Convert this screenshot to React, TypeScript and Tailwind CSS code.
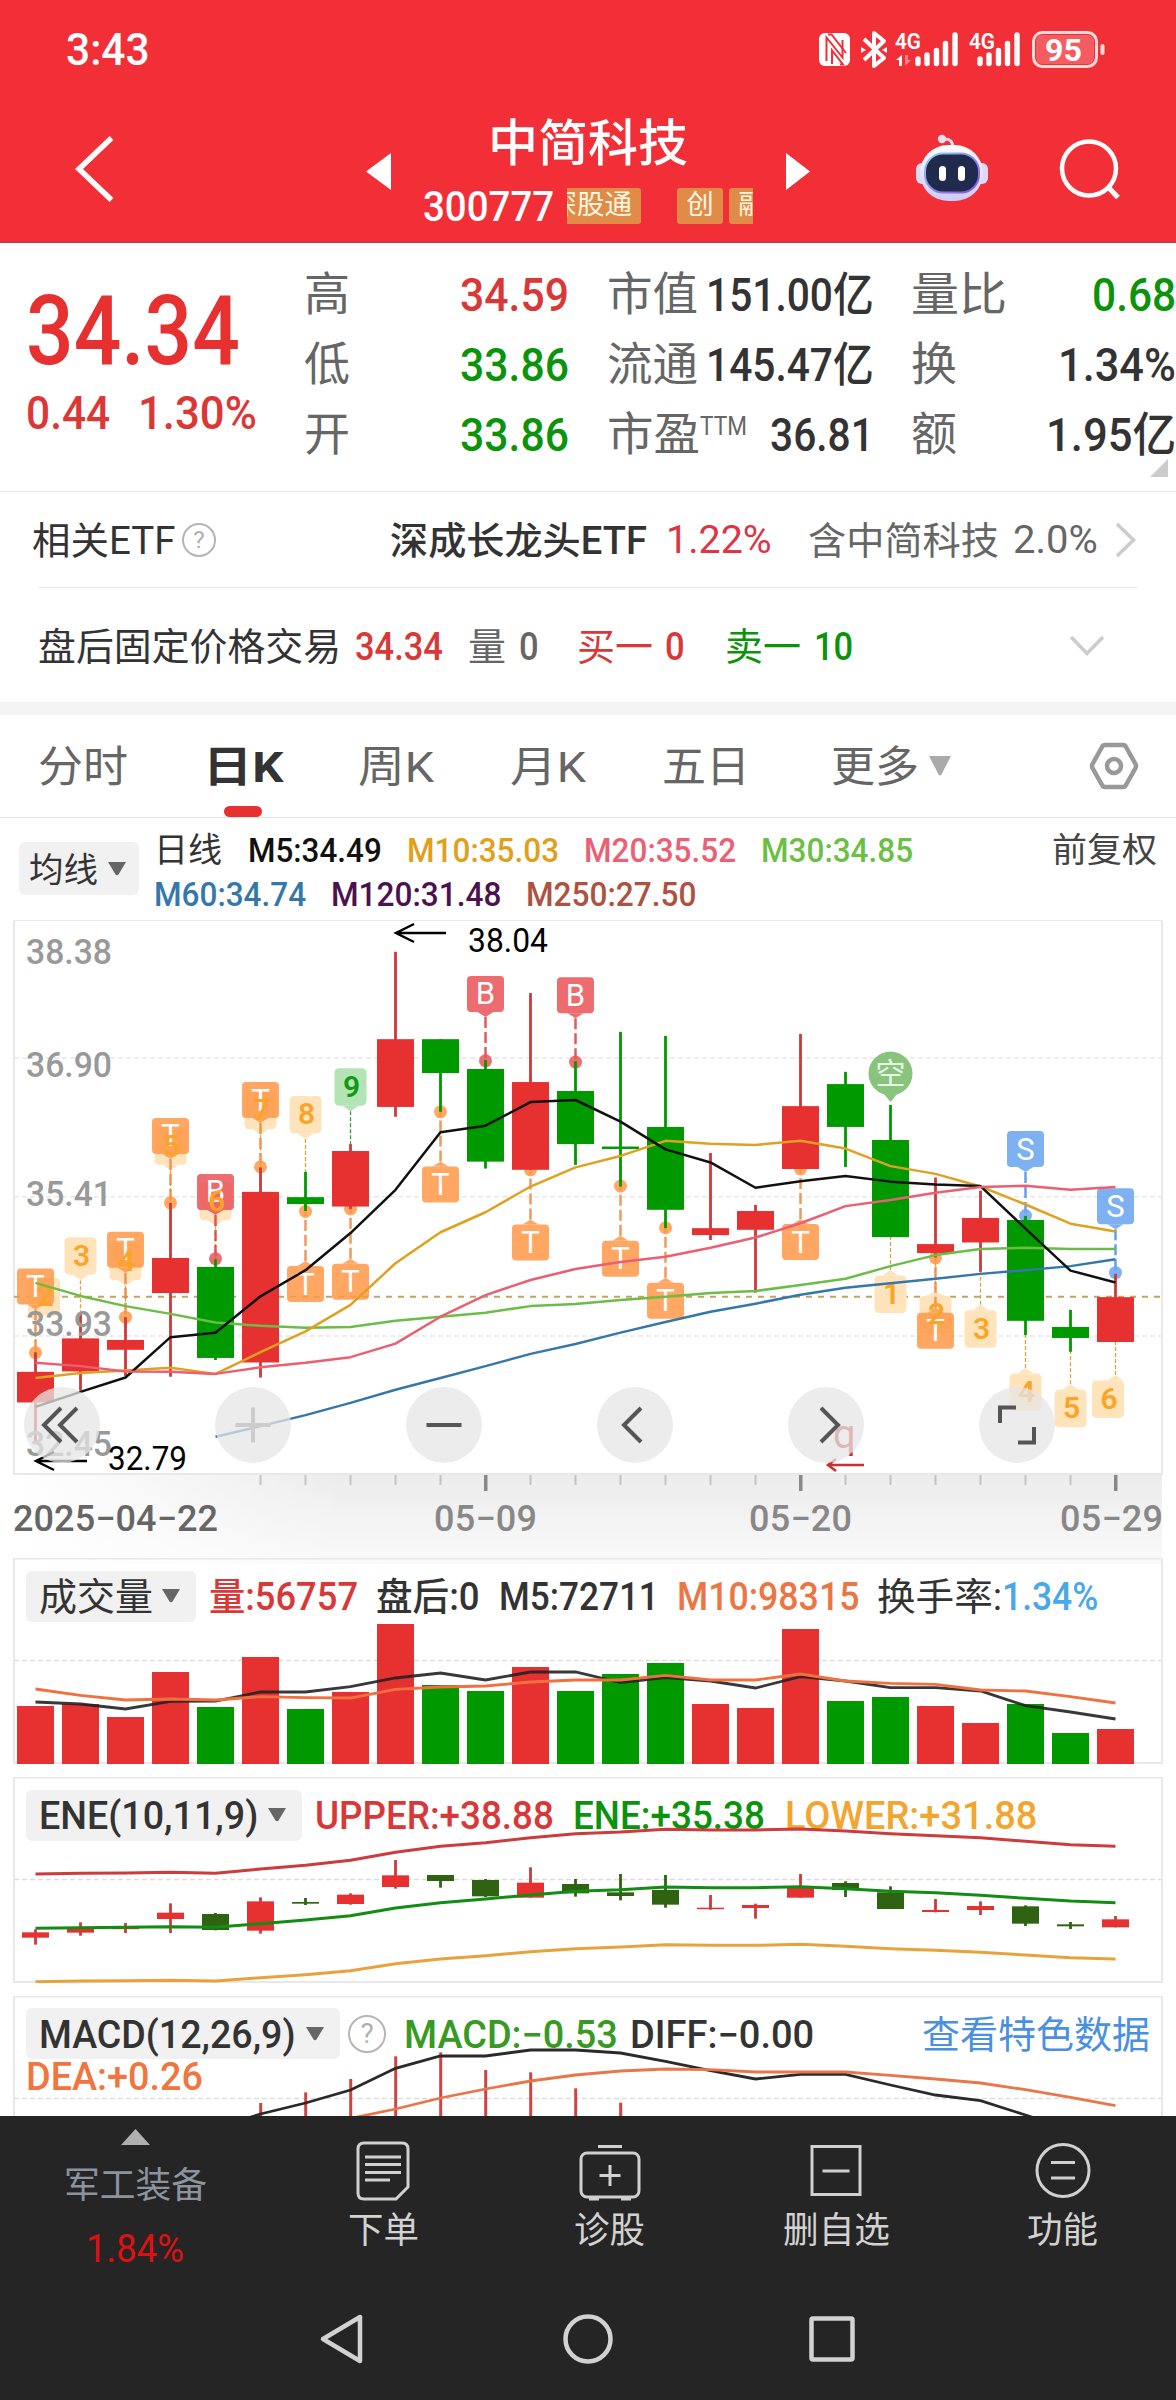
import { useLayoutEffect, useRef } from "react";
import type { ReactNode } from "react";
import { clsx } from "clsx";

const RED = "#e73030";
const GREEN = "#009900";

/* ---------- data: one entry per trading day ---------- */

// [colour, high, body top, body bottom, low] in plot units
type Candle = [string, number, number, number, number];

const candles: Candle[] = [
  ["r", 1108, 1156, 1231, 1330],
  ["r", 1010, 1074, 1155, 1202],
  ["r", 1022, 1078, 1102, 1166],
  ["r", 742, 877, 963, 1168],
  ["g", 880, 899, 1122, 1127],
  ["r", 655, 715, 1133, 1170],
  ["g", 666, 728, 745, 762],
  ["r", 598, 615, 751, 757],
  ["r", 127, 341, 507, 531],
  ["g", 341, 341, 424, 519],
  ["g", 392, 414, 641, 658],
  ["r", 228, 446, 661, 661],
  ["g", 395, 468, 598, 649],
  ["g", 323, 604, 610, 702],
  ["g", 333, 556, 759, 804],
  ["r", 620, 804, 821, 833],
  ["r", 747, 762, 808, 962],
  ["r", 328, 505, 659, 659],
  ["g", 421, 451, 556, 654],
  ["g", 502, 588, 826, 826],
  ["r", 680, 843, 865, 876],
  ["r", 712, 779, 839, 911],
  ["g", 774, 784, 1031, 1066],
  ["g", 1004, 1046, 1073, 1107],
  ["r", 916, 973, 1083, 1083],
];

const ma5 = [1242, 1205, 1170, 1071, 1060, 971, 907, 816, 710, 569, 553, 495, 490, 543, 611, 643, 705, 689, 676, 690, 697, 701, 805, 908, 937];
const ma10 = [1171, 1159, 1153, 1146, 1161, 1108, 1057, 992, 890, 814, 765, 702, 655, 627, 590, 597, 600, 590, 609, 652, 671, 702, 746, 793, 812];
const ma20 = [1134, 1142, 1155, 1156, 1161, 1145, 1134, 1120, 1087, 1021, 968, 931, 904, 887, 874, 852, 827, 792, 750, 735, 717, 703, 700, 710, 703];
const ma30 = [938, 970, 995, 1014, 1035, 1043, 1048, 1046, 1031, 1021, 1011, 995, 990, 980, 972, 963, 958, 943, 928, 897, 870, 855, 852, 855, 855];
const ma60 = [1315, 1289, 1262, 1232, 1200, 1171, 1142, 1112, 1088, 1060, 1034, 1009, 989, 967, 950, 939, 928, 916, 907, 897, 880];

const volumes = [498, 492, 531, 396, 501, 351, 507, 456, 252, 435, 453, 381, 453, 402, 369, 492, 504, 267, 483, 471, 498, 549, 492, 579, 567];
const vol5 = [486, 492, 507, 484, 483, 456, 456, 440, 414, 399, 420, 396, 396, 428, 413, 423, 444, 410, 423, 443, 443, 453, 497, 516, 537];
const vol10 = [447, 466, 480, 477, 480, 470, 473, 474, 448, 441, 438, 426, 420, 420, 406, 420, 420, 402, 423, 430, 433, 450, 453, 470, 489];

const eneCandles: Candle[] = [
  ["r", 1168, 1177, 1193, 1214],
  ["r", 1147, 1163, 1178, 1187],
  ["r", 1149, 1163, 1166, 1179],
  ["r", 1090, 1118, 1137, 1179],
  ["g", 1119, 1122, 1170, 1171],
  ["r", 1072, 1084, 1172, 1181],
  ["g", 1074, 1086, 1091, 1095],
  ["r", 1060, 1064, 1092, 1094],
  ["r", 960, 1006, 1041, 1046],
  ["g", 1005, 1005, 1023, 1043],
  ["g", 1017, 1020, 1069, 1071],
  ["r", 982, 1028, 1073, 1073],
  ["g", 1017, 1032, 1060, 1070],
  ["g", 1002, 1057, 1068, 1081],
  ["g", 1005, 1050, 1094, 1103],
  ["r", 1065, 1103, 1107, 1109],
  ["r", 1091, 1095, 1104, 1136],
  ["r", 1002, 1043, 1073, 1073],
  ["g", 1024, 1029, 1050, 1071],
  ["g", 1039, 1057, 1107, 1107],
  ["r", 1077, 1110, 1116, 1117],
  ["r", 1084, 1098, 1110, 1125],
  ["g", 1096, 1099, 1151, 1158],
  ["g", 1146, 1153, 1159, 1167],
  ["r", 1128, 1138, 1162, 1162],
];
const eneUpper = [1002, 1000, 999, 997, 1000, 987, 976, 961, 937, 919, 908, 893, 881, 876, 868, 870, 870, 867, 873, 881, 887, 893, 904, 914, 919];
const eneMid = [1165, 1163, 1162, 1160, 1162, 1151, 1140, 1127, 1104, 1088, 1077, 1065, 1054, 1049, 1041, 1043, 1043, 1040, 1046, 1054, 1058, 1066, 1075, 1083, 1088];
const eneLower = [1325, 1323, 1322, 1321, 1323, 1313, 1304, 1292, 1271, 1257, 1247, 1235, 1226, 1221, 1214, 1216, 1216, 1213, 1219, 1226, 1231, 1237, 1245, 1253, 1257];

const macdBars = [369, 337, 297, 229, 217, 270, 277, 325, 368];
const diff = [445, 402, 369, 330, 265, 228, 228, 210, 210, 219, 244, 272, 297, 283, 283, 315, 345, 362, 405, 450];
const dea = [415, 387, 354, 327, 303, 285, 273, 267, 269, 276, 276, 276, 286, 297, 309, 329, 352, 377];

// T / B / S signals: [day, letter, box top, dot]
const signals: [number, string, number, number][] = [
  [0, "T", 903, 1109],
  [2, "T", 813, 1022],
  [3, "T", 534, 742],
  [4, "B", 671, 879],
  [5, "T", 446, 654],
  [6, "T", 897, 763],
  [7, "T", 891, 757],
  [9, "T", 653, 519],
  [10, "B", 186, 394],
  [11, "T", 795, 661],
  [12, "B", 189, 397],
  [13, "T", 835, 701],
  [14, "T", 938, 803],
  [17, "T", 794, 659],
  [20, "T", 1011, 877],
  [22, "S", 566, 773],
  [24, "S", 706, 913],
];

// sequence counters: [day, digit, box top, line end, x shift]
const counters: [number, string, number, number, number][] = [
  [0, "2", 926, 1108, 8.5],
  [1, "3", 826, 1010, 0],
  [2, "4", 840, 1022, 0],
  [3, "5", 557, 742, 0],
  [4, "6", 693, 880, 0],
  [5, "7", 470, 655, 0],
  [6, "8", 480, 666, 0],
  [7, "9", 412, 598, 0],
  [19, "1", 920, 826, 0],
  [20, "2", 970, 876, 0],
  [21, "3", 1005, 911, 0],
  [22, "4", 1160, 1066, 0],
  [23, "5", 1200, 1107, 0],
  [24, "6", 1177, 1083, -7.5],
];

/* ---------- helpers ---------- */

const px = (i: number) => 35.5 + i * 45;
const ky = (v: number) => v / 2.45 - 20;
const vy = (v: number) => v / 3 - 18;
const ey = (v: number) => v / 3 - 237;
const my = (v: number) => v / 3 - 16;

const points = (vals: number[], y: (v: number) => number, start = 0) =>
  vals.map((v, i) => `${px(i + start)},${y(v)}`).join(" ");

// Stretches its text so that it exactly fills the width given by className
function Fit({ children, className }: { children: ReactNode; className?: string }) {
  const outer = useRef<HTMLSpanElement>(null);
  const inner = useRef<HTMLSpanElement>(null);
  useLayoutEffect(() => {
    if (!outer.current || !inner.current) return;
    const scale = outer.current.clientWidth / inner.current.offsetWidth;
    inner.current.style.transform = `scaleX(${scale})`;
  }, []);
  return (
    <span ref={outer} className={clsx("block shrink-0 whitespace-nowrap pt-[2px] leading-none", className)}>
      <span ref={inner} className="inline-block origin-left">
        {children}
      </span>
    </span>
  );
}

function Caret({ className }: { className?: string }) {
  return (
    <svg className={clsx("shrink-0", className)} width="18" height="14" viewBox="0 0 18 14">
      <path d="M0 0H18L10.5 12.5Q9 14 7.5 12.5Z" fill="#666" />
    </svg>
  );
}

function Help({ className }: { className?: string }) {
  return (
    <span
      className={clsx(
        "flex shrink-0 items-center justify-center rounded-full border-2 border-[#b5b5b5] leading-none text-[#b0b0b0]",
        className
      )}
    >
      ?
    </span>
  );
}

/* ---------- header ---------- */

function StatusBar() {
  return (
    <div className="flex h-[100px] items-center justify-between pl-[66px] pr-[68px] text-white">
      <Fit className="mt-[-3px] w-[84px] text-[45px] font-medium">3:43</Fit>
      <svg width="292" height="44" viewBox="816 28 292 44" fill="#fff">
        <rect x="819" y="33" width="31" height="33" rx="6" />
        <g stroke="#f22f37" strokeWidth="2" fill="none">
          <path d="M826.500 61V37.500L842.500 57.500V40" />
          <path d="M828 34.500H831.500L846 53" />
          <path d="M832 64V50.500L843 64.500H840" />
        </g>
        <path d="M864 39L884 58L874 66V33L884 41L864 60" stroke="#fff" strokeWidth="4" fill="none" strokeLinejoin="round" />
        <path d="M861 47L866 50L861 53ZM887 47L882 50L887 53Z" />
        <text x="895" y="49" fontSize="22" fontWeight="600" textLength="26" lengthAdjust="spacingAndGlyphs">4G</text>
        <path d="M896 60L902 55V66H899V60Z" />
        <path d="M905 55V66L911 60H908V55Z" opacity=".4" />
        <g stroke="#fff" strokeWidth="5.4" strokeLinecap="round">
          <path d="M918 59V63.500M927 55V63.500M936.500 50.500V63.500M945.500 43.500V63.500M955 35V63.500" />
          <path d="M980 59V63.500M989 55V63.500M998.500 50.500V63.500M1007.500 43.500V63.500M1017 35V63.500" />
        </g>
        <text x="969" y="49" fontSize="22" fontWeight="600" textLength="26" lengthAdjust="spacingAndGlyphs">4G</text>
        <rect x="1036" y="35" width="58" height="29" rx="6" opacity=".22" />
        <rect x="1033.500" y="32.500" width="63" height="34" rx="9" fill="none" stroke="#ffdcdc" strokeWidth="3" />
        <rect x="1100.500" y="44" width="4" height="11" rx="2" fill="#ffdcdc" />
        <text x="1045" y="60.500" fontSize="32" fontWeight="700" textLength="37" lengthAdjust="spacingAndGlyphs">95</text>
      </svg>
    </div>
  );
}

function Robot() {
  return (
    <svg width="76" height="70" viewBox="914 133 76 70" className="mb-[6px] ml-[104px] shrink-0">
      <defs>
        <linearGradient id="shell" x1="0" y1="0" x2="0" y2="1">
          <stop offset="0" stopColor="#fff" />
          <stop offset="1" stopColor="#cfcaf5" />
        </linearGradient>
        <linearGradient id="rim" x1="0" y1="0" x2="1" y2="1">
          <stop offset="0" stopColor="#8fd0f5" />
          <stop offset="1" stopColor="#8a4be0" />
        </linearGradient>
      </defs>
      <path d="M943 139Q953 138 953 148" stroke="#e8dcf5" strokeWidth="3" fill="none" />
      <circle cx="942" cy="139" r="4.200" fill="#f4dfee" />
      <rect x="916" y="163" width="14" height="21" rx="6" fill="#dcd8f8" />
      <rect x="974" y="163" width="14" height="21" rx="6" fill="#dcd8f8" />
      <rect x="920" y="145" width="63" height="56" rx="28" fill="url(#shell)" />
      <rect x="925" y="153.500" width="54" height="39" rx="18" fill="#1f2a4d" stroke="url(#rim)" strokeWidth="2" />
      <rect x="939" y="166" width="7" height="15" rx="3.500" fill="#fff" />
      <rect x="958" y="166" width="7" height="15" rx="3.500" fill="#fff" />
    </svg>
  );
}

function Header() {
  return (
    <header className="h-[243px] border-b border-[#a8484c] bg-[#f22f37]">
      <StatusBar />
      <div className="flex h-[142px] items-center text-white">
        <svg width="40" height="68" viewBox="0 0 40 68" className="mb-[4px] ml-[75px] shrink-0">
          <path d="M36.500 4L4 35L36.500 66" transform="translate(0 -1)" fill="none" stroke="#fff" strokeWidth="5.500" />
        </svg>
        <svg width="25" height="37" viewBox="0 0 25 37" className="ml-[251px] shrink-0">
          <path d="M25 0V37L0 18.500Z" fill="#fff" />
        </svg>
        <div className="ml-[32px] flex w-[330px] flex-col pt-[4px]">
          <div className="flex h-[44px] items-center justify-center">
            <Fit className="mt-[-2px] w-[200px] text-[50px] font-medium">中简科技</Fit>
          </div>
          <div className="mt-[22px] flex h-[36px] items-center">
            <Fit className="w-[131px] text-[42px] font-medium">300777</Fit>
            <div className="ml-[13px] flex h-[36px] w-[187px] overflow-hidden text-[27.500px] leading-[34px] text-[#fff6e0]">
              <div className="flex w-[74px] shrink-0 justify-end overflow-hidden rounded-r-[3px] bg-[#e08c48] pr-[9px]">
                <span className="whitespace-nowrap">深股通</span>
              </div>
              <div className="ml-[36px] w-[46px] shrink-0 rounded-[3px] bg-[#e08c48] text-center">创</div>
              <div className="ml-[6px] w-[46px] shrink-0 rounded-[3px] bg-[#e08c48] text-center">融</div>
            </div>
          </div>
        </div>
        <svg width="24" height="37" viewBox="0 0 24 37" className="ml-[33px] shrink-0">
          <path d="M0 0V37L24 18.500Z" fill="#fff" />
        </svg>
        <Robot />
        <svg width="64" height="70" viewBox="1058 137 64 70" className="ml-[68px] shrink-0">
          <circle cx="1089" cy="169.500" r="27" fill="none" stroke="#fff" strokeWidth="4.500" />
          <path d="M1108 188L1118 198.500" stroke="#fff" strokeWidth="5" />
        </svg>
      </div>
    </header>
  );
}

/* ---------- quote ---------- */

function Quote() {
  return (
    <section className="relative flex h-[249px] items-start border-b border-[#e8e8e8] bg-white">
      <div className="ml-[26px] w-[278px] shrink-0 pt-[38px]">
        <Fit className="w-[214px] text-[96px] font-medium text-[#e73030]">34.34</Fit>
        <div className="mt-[8px] flex text-[#dc3737]">
          <Fit className="w-[84px] text-[47px] font-medium">0.44</Fit>
          <Fit className="ml-[28px] w-[119px] text-[47px] font-medium">1.30%</Fit>
        </div>
      </div>
      <div className="w-[265px] shrink-0 pt-[15px]">
        {[
          ["高", "34.59"],
          ["低", "33.86"],
          ["开", "33.86"],
        ].map(([label, value], i) => (
          <div key={label} className="flex h-[70px] items-center justify-between">
            <Fit className="w-[46px] text-[46px] text-[#666]">{label}</Fit>
            <Fit className={clsx("w-[109px] text-[47px] font-medium", i === 0 ? "text-[#d93838]" : "text-[#0c930c]")}>{value}</Fit>
          </div>
        ))}
      </div>
      <div className="ml-[38px] w-[267px] shrink-0 pt-[15px] text-[#333]">
        <div className="flex h-[70px] items-center justify-between">
          <Fit className="w-[91px] text-[46px] text-[#666]">市值</Fit>
          <Fit className="w-[168px] text-[47px] font-medium">151.00亿</Fit>
        </div>
        <div className="flex h-[70px] items-center justify-between">
          <Fit className="w-[91px] text-[46px] text-[#666]">流通</Fit>
          <Fit className="w-[168px] text-[47px] font-medium">145.47亿</Fit>
        </div>
        <div className="flex h-[70px] items-center">
          <Fit className="w-[93px] text-[46px] text-[#666]">市盈</Fit>
          <Fit className="mb-[16px] w-[47px] text-[25px] text-[#666]">TTM</Fit>
          <Fit className="ml-[23px] w-[104px] text-[47px] font-medium">36.81</Fit>
        </div>
      </div>
      <div className="ml-[37px] w-[265px] shrink-0 pt-[15px] text-[#333]">
        <div className="flex h-[70px] items-center justify-between">
          <Fit className="w-[96px] text-[46px] text-[#666]">量比</Fit>
          <Fit className="w-[84px] text-[47px] font-medium text-[#0c930c]">0.68</Fit>
        </div>
        <div className="flex h-[70px] items-center justify-between">
          <Fit className="w-[46px] text-[46px] text-[#666]">换</Fit>
          <Fit className="w-[118px] text-[47px] font-medium">1.34%</Fit>
        </div>
        <div className="flex h-[70px] items-center justify-between">
          <Fit className="w-[46px] text-[46px] text-[#666]">额</Fit>
          <Fit className="w-[130px] text-[47px] font-medium">1.95亿</Fit>
        </div>
      </div>
      <svg width="18" height="18" className="absolute bottom-[14px] right-[8px]">
        <path d="M18 0V18H0Z" fill="#ccc" />
      </svg>
    </section>
  );
}

function InfoRows() {
  return (
    <section className="bg-white text-[#333]">
      <div className="flex h-[95px] items-center">
        <Fit className="ml-[32px] w-[144px] text-[38px]">相关ETF</Fit>
        <Help className="ml-[6px] size-[34px] text-[24px]" />
        <Fit className="ml-[174px] w-[257px] text-[38px] font-medium">深成长龙头ETF</Fit>
        <Fit className="ml-[19px] w-[106px] text-[39px] text-[#dc3545]">1.22%</Fit>
        <Fit className="ml-[36px] w-[191px] text-[38px] text-[#666]">含中简科技</Fit>
        <Fit className="ml-[14px] w-[85px] text-[39px] text-[#666]">2.0%</Fit>
        <svg width="22" height="36" viewBox="0 0 22 36" className="ml-[17px] shrink-0">
          <path d="M2 2L18.500 18L2 34" fill="none" stroke="#ccc" strokeWidth="3.500" />
        </svg>
      </div>
      <div className="mx-[38px] h-px bg-[#e8e8e8]" />
      <div className="flex h-[116px] items-center">
        <Fit className="ml-[38px] w-[303px] text-[38px]">盘后固定价格交易</Fit>
        <Fit className="ml-[14px] w-[88px] text-[38px] font-medium text-[#d93838]">34.34</Fit>
        <Fit className="ml-[25px] w-[38px] text-[38px] text-[#666]">量</Fit>
        <Fit className="ml-[13px] w-[20px] text-[38px] font-medium text-[#666]">0</Fit>
        <Fit className="ml-[38px] w-[76px] text-[38px] text-[#d93838]">买一</Fit>
        <Fit className="ml-[12px] w-[20px] text-[38px] font-medium text-[#d93838]">0</Fit>
        <Fit className="ml-[40px] w-[76px] text-[38px] text-[#0c930c]">卖一</Fit>
        <Fit className="ml-[13px] w-[39px] text-[38px] font-medium text-[#0c930c]">10</Fit>
        <svg width="36" height="22" viewBox="0 0 36 22" className="ml-[216px] shrink-0">
          <path d="M2 2L18 18.500L34 2" fill="none" stroke="#ccc" strokeWidth="3.500" />
        </svg>
      </div>
      <div className="mt-[-2px] h-[13px] bg-[#f4f4f4]" />
    </section>
  );
}

function Tabs() {
  return (
    <nav className="flex h-[103px] items-center border-b border-[#e5e5e5] bg-white text-[43px] text-[#666]">
      <Fit className="ml-[38px] w-[90px]">分时</Fit>
      <div className="relative ml-[75px] flex h-full items-center">
        <Fit className="w-[80px] font-bold text-[#333]">日K</Fit>
        <span className="absolute bottom-0 left-[21px] h-[11px] w-[38px] rounded-full bg-[#e73030]" />
      </div>
      <Fit className="ml-[75px] w-[76px]">周K</Fit>
      <Fit className="ml-[76px] w-[76px]">月K</Fit>
      <Fit className="ml-[76px] w-[88px]">五日</Fit>
      <Fit className="ml-[81px] w-[88px]">更多</Fit>
      <svg width="22" height="20" viewBox="0 0 22 20" className="ml-[10px] shrink-0">
        <path d="M0 0H22L12.500 18.500Q11 20.500 9.500 18.500Z" fill="#aaa" />
      </svg>
      <svg width="50" height="48" viewBox="0 0 50 48" className="ml-[138px] shrink-0" fill="none" stroke="#999" strokeWidth="4.500">
        <path d="M16 3H34Q36 3 37 5L46.500 22Q47.500 24 46.500 26L37 43Q36 45 34 45H16Q14 45 13 43L3.500 26Q2.500 24 3.500 22L13 5Q14 3 16 3Z" />
        <circle cx="25" cy="24" r="7" />
      </svg>
    </nav>
  );
}

function MaLegend() {
  return (
    <div className="flex h-[102px] bg-white text-[34px] font-medium">
      <div className="ml-[19px] mt-[24px] flex h-[53px] w-[120px] shrink-0 items-center rounded-[6px] bg-[#f1f1f1] font-normal text-[#333]">
        <Fit className="ml-[10px] w-[69px]">均线</Fit>
        <Caret className="ml-[10px]" />
      </div>
      <div className="ml-[15px] flex flex-col pt-[9px]">
        <div className="flex h-[44px] items-center">
          <Fit className="w-[68px] font-normal text-[#333]">日线</Fit>
          <Fit className="ml-[26px] w-[134px] text-[#111]">M5:34.49</Fit>
          <Fit className="ml-[25px] w-[152px] text-[#e0a01c]">M10:35.03</Fit>
          <Fit className="ml-[25px] w-[152px] text-[#eb6075]">M20:35.52</Fit>
          <Fit className="ml-[25px] w-[152px] text-[#6cbf45]">M30:34.85</Fit>
          <Fit className="ml-[139px] w-[105px] font-normal text-[#444]">前复权</Fit>
        </div>
        <div className="flex h-[44px] items-center">
          <Fit className="w-[152px] text-[#3478ab]">M60:34.74</Fit>
          <Fit className="ml-[25px] w-[170px] text-[#4b124f]">M120:31.48</Fit>
          <Fit className="ml-[25px] w-[170px] text-[#ad5140]">M250:27.50</Fit>
        </div>
      </div>
    </div>
  );
}

/* ---------- K line ---------- */

function Candles({ data, y, width, green }: { data: Candle[]; y: (v: number) => number; width: number; green: string }) {
  return (
    <>
      {data.map(([color, hi, top, bottom, lo], i) => {
        const up = color === "r";
        return (
          <g key={i}>
            <rect x={px(i) - 1.4} y={y(hi)} width="2.800" height={y(lo) - y(hi)} fill={up ? "#cd3a3a" : green} />
            <rect x={px(i) - width / 2} y={y(top)} width={width} height={Math.max(y(bottom) - y(top), 1.5)} fill={up ? RED : green} />
          </g>
        );
      })}
    </>
  );
}

function Signal({ day, letter, top, dot }: { day: number; letter: string; top: number; dot: number }) {
  const x = px(day);
  const y = ky(top);
  const d = ky(dot);
  const below = top > dot;
  const fill = letter === "T" ? "#ff9848" : letter === "B" ? "#ea5358" : "#68a4f0";
  const line = letter === "T" ? "#ee8840" : letter === "B" ? "#d84040" : "#4a90e8";
  const edge = below ? y : y + 36;
  const tip = below ? y - 5 : y + 41;
  return (
    <g>
      <line x1={x} x2={x} y1={tip} y2={d} stroke={line} strokeWidth="2.500" strokeDasharray="11 4" opacity=".85" />
      <circle cx={x} cy={d} r="6.500" fill={fill} opacity=".85" />
      <g opacity=".85">
        <rect x={x - 18.5} y={y} width="37" height="36" rx="4" fill={fill} />
        <path d={`M${x - 8} ${edge}L${x} ${tip}L${x + 8} ${edge}Z`} fill={fill} />
      </g>
      <text x={x} y={y + 28.5} textAnchor="middle" fontSize="31" fill="#fff">
        {letter}
      </text>
    </g>
  );
}

function CounterBox({ day, digit, top, end, shift }: { day: number; digit: string; top: number; end: number; shift: number }) {
  const x = px(day);
  const cx = x + shift;
  const y = ky(top);
  const below = top > end;
  const nine = digit === "9";
  const fill = nine ? "#b4e3b6" : "#ffe3bb";
  const edge = below ? y : y + 37.500;
  const tip = below ? y - 5.500 : y + 43;
  return (
    <g>
      <line x1={x} x2={x} y1={tip} y2={ky(end)} stroke={nine ? "#3a9a3a" : "#d8a848"} strokeWidth="1.300" strokeDasharray="4 2" />
      <rect x={cx - 16} y={y} width="32" height="37.500" rx="4.500" fill={fill} />
      <path d={`M${x - 8} ${edge}L${x} ${tip}L${x + 8} ${edge}Z`} fill={fill} />
    </g>
  );
}

function RoundButton({ faded, children }: { faded?: boolean; children: ReactNode }) {
  return (
    <button className="flex size-[76px] items-center justify-center rounded-full bg-[#e6e6e6]/75">
      <svg width="44" height="44" viewBox="-22 -22 44 44" fill="none" stroke={faded ? "#ccc" : "#555"} strokeWidth="4">
        {children}
      </svg>
    </button>
  );
}

function KLine() {
  return (
    <section className="relative h-[638px] bg-white">
      <div className="absolute inset-x-[14px] bottom-[-6px] top-[554px] bg-linear-to-b from-[#ececec] to-[#fafafa]" />
      <div className="absolute bottom-[-6px] left-[14px] top-[555px] w-[330px] bg-linear-to-r from-white to-transparent" />
      <svg width="1176" height="638" viewBox="0 0 1176 638" className="absolute inset-0">
        <rect x="14" y="0" width="1148" height="554" fill="none" stroke="#e8e8e8" strokeWidth="2" />
        {[387, 727, 1068].map((v) => (
          <line key={v} x1="14" x2="1161" y1={ky(v)} y2={ky(v)} stroke="#e8e8e8" strokeWidth="1.500" strokeDasharray="5 3" />
        ))}
        <line x1="14" x2="1161" y1={ky(972)} y2={ky(972)} stroke="#c9a263" strokeWidth="1.800" strokeDasharray="6 6" />

        {counters.map(([day, digit, top, end, shift]) => (
          <CounterBox key={day} day={day} digit={digit} top={top} end={end} shift={shift} />
        ))}
        {signals.map(([day, letter, top, dot]) => (
          <Signal key={day} day={day} letter={letter} top={top} dot={dot} />
        ))}
        {counters.map(([day, digit, top, , shift]) => (
          <text
            key={day}
            x={px(day) + shift + 1}
            y={ky(top) + 28.5}
            textAnchor="middle"
            fontSize="30"
            fontWeight="600"
            fill={digit === "9" ? "#119a11" : "#fba428"}
          >
            {digit}
          </text>
        ))}
        <path d={`M${px(19) - 9} 171L${px(19)} 182L${px(19) + 9} 171Z`} fill="#88c47c" />
        <circle cx={px(19)} cy="153.500" r="22" fill="#88c47c" />
        <text x={px(19)} y="164" textAnchor="middle" fontSize="30" fill="#eaf8e6">
          空
        </text>

        <Candles data={candles} y={ky} width={37} green={GREEN} />

        <g fontSize="35" fontWeight="500" fill="#999">
          {(
            [
              ["38.38", 44],
              ["36.90", 156.5],
              ["35.41", 285.5],
              ["33.93", 415.5],
              ["32.45", 536],
            ] as [string, number][]
          ).map(([t, y]) => (
            <text key={t} x="26" y={y} textLength={86} lengthAdjust="spacingAndGlyphs">
              {t}
            </text>
          ))}
        </g>

        <g fill="none" strokeWidth="2.500" strokeLinejoin="round">
          <polyline points={points(ma60, ky, 4)} stroke="#3478ab" />
          <polyline points={points(ma30, ky)} stroke="#6cbc48" />
          <polyline points={points(ma10, ky)} stroke="#e0a020" />
          <polyline points={points(ma5, ky)} stroke="#111" />
          <polyline points={points(ma20, ky)} stroke="#ea5f72" />
        </g>

        <g fill="none" stroke="#000" strokeWidth="2.500">
          <path d="M446 13H396M414 4L396 13L414 22" />
          <path d="M87 541H36M54 532L36 541L54 550" />
          <path d="M864 545H828M836 539L828 545L836 551" stroke="#cc2f2f" />
        </g>
        <g fontSize="33" fill="#000">
          <text x="468" y="31.500" textLength="80" lengthAdjust="spacingAndGlyphs">38.04</text>
          <text x="108" y="550" textLength="79" lengthAdjust="spacingAndGlyphs">32.79</text>
        </g>
        <text x="833" y="528" fontSize="40" fill="#cc2f2f">q</text>

        {Array.from({ length: 20 }, (_, i) => i + 5).map((i) => {
          const major = i === 10 || i === 17 || i === 24;
          return (
            <rect
              key={i}
              x={px(i) - (major ? 1.5 : 1)}
              y="555"
              width={major ? 3.5 : 2}
              height={major ? 16 : 10}
              fill={major ? "#888" : "#c4c4c4"}
            />
          );
        })}
        <g fontSize="36" fontWeight="500" fill="#888">
          <text x="13" y="610.500" textLength="205" lengthAdjust="spacing" fill="#666">2025−04−22</text>
          <text x="434" y="610.500" textLength="103" lengthAdjust="spacing">05−09</text>
          <text x="749" y="610.500" textLength="103" lengthAdjust="spacing">05−20</text>
          <text x="1060" y="610.500" textLength="103" lengthAdjust="spacing">05−29</text>
        </g>
      </svg>

      <div className="absolute left-[24px] top-[467px] flex gap-[115px]">
        <RoundButton>
          <path d="M-1 -17L-18 0L-1 17M15 -17L-2 0L15 17" />
        </RoundButton>
        <RoundButton faded>
          <path d="M-17.500 0H17.500M0 -17.500V17.500" />
        </RoundButton>
        <RoundButton>
          <path d="M-17.500 0H17.500" />
        </RoundButton>
        <RoundButton>
          <path d="M6 -17L-11 0L6 17" />
        </RoundButton>
        <RoundButton>
          <path d="M-5 -17L12 0L-5 17" />
        </RoundButton>
        <RoundButton>
          <path d="M-17 -2V-17.500H-1M1 17.500H17V2" />
        </RoundButton>
      </div>
    </section>
  );
}

/* ---------- indicator panels ---------- */

function Panel({ className, chart, children }: { className?: string; chart: ReactNode; children: ReactNode }) {
  return (
    <section className={clsx("relative overflow-hidden", className)}>
      <div className="relative text-[38px] font-medium text-[#333]">{children}</div>
      <svg width="1176" height="206" viewBox="0 0 1176 206" className="absolute inset-0">
        <rect x="14" y="0.500" width="1148" height="204.500" fill="none" stroke="#e8e8e8" strokeWidth="2" />
        <line x1="14" x2="1161" y1="102.500" y2="102.500" stroke="#ddd" strokeWidth="1.300" strokeDasharray="5 3" />
        {chart}
      </svg>
    </section>
  );
}

function Volume() {
  return (
    <Panel
      className="h-[207px]"
      chart={
        <>
          {volumes.map((v, i) => (
            <rect key={i} x={px(i) - 18.5} y={vy(v)} width="37" height={206 - vy(v)} fill={candles[i][0] === "r" ? RED : GREEN} />
          ))}
          <polyline points={points(vol5, vy)} fill="none" stroke="#222" strokeOpacity=".9" strokeWidth="2.800" />
          <polyline points={points(vol10, vy)} fill="none" stroke="#f0713f" strokeWidth="2.800" />
        </>
      }
    >
      <div className="flex h-[76px] items-center">
        <div className="ml-[26px] flex h-[51px] w-[170px] items-center rounded-[6px] bg-[#f1f1f1]">
          <Fit className="ml-[13px] w-[114px] font-normal">成交量</Fit>
          <Caret className="ml-[9px]" />
        </div>
        <Fit className="ml-[13px] w-[149px] text-[#d93838]">量:56757</Fit>
        <Fit className="ml-[18px] w-[104px]">盘后:0</Fit>
        <Fit className="ml-[19px] w-[160px]">M5:72711</Fit>
        <Fit className="ml-[18px] w-[182px] text-[#ec7643]">M10:98315</Fit>
        <Fit className="ml-[18px] w-[125px] font-normal">换手率:</Fit>
        <Fit className="w-[96px] text-[#48a8e8]">1.34%</Fit>
      </div>
    </Panel>
  );
}

function Ene() {
  return (
    <Panel
      className="mt-[12px] h-[207px]"
      chart={
        <>
          <Candles data={eneCandles} y={ey} width={27} green="#2f6312" />
          <g fill="none" strokeWidth="3">
            <polyline points={points(eneUpper, ey)} stroke="#cc3c3c" />
            <polyline points={points(eneMid, ey)} stroke="#128c12" />
            <polyline points={points(eneLower, ey)} stroke="#e8a23c" />
          </g>
        </>
      }
    >
      <div className="flex h-[76px] items-center">
        <div className="ml-[26px] flex h-[51px] w-[276px] items-center rounded-[6px] bg-[#f1f1f1]">
          <Fit className="ml-[13px] w-[219px]">ENE(10,11,9)</Fit>
          <Caret className="ml-[10px]" />
        </div>
        <Fit className="ml-[13px] w-[239px] text-[#d93838]">UPPER:+38.88</Fit>
        <Fit className="ml-[19px] w-[192px] text-[#0c930c]">ENE:+35.38</Fit>
        <Fit className="ml-[20px] w-[252px] text-[#f2a52f]">LOWER:+31.88</Fit>
      </div>
    </Panel>
  );
}

function Macd() {
  return (
    <Panel
      className="mt-[12px] h-[120px]"
      chart={
        <>
          {macdBars.map((v, i) => (
            <rect key={i} x={px(i + 5) - 1.3} y={my(v)} width="3" height="110" fill="#cc4444" />
          ))}
          <polyline points={points(diff, my, 4)} fill="none" stroke="#2a2a2a" strokeWidth="2.800" />
          <polyline points={points(dea, my, 7)} fill="none" stroke="#e8764a" strokeWidth="2.800" />
        </>
      }
    >
      <div className="flex h-[75px] items-center">
        <div className="ml-[26px] flex h-[51px] w-[314px] items-center rounded-[6px] bg-[#f1f1f1]">
          <Fit className="ml-[13px] w-[257px]">MACD(12,26,9)</Fit>
          <Caret className="ml-[10px]" />
        </div>
        <Help className="ml-[8px] size-[38px] text-[28px] font-normal" />
        <Fit className="ml-[18px] w-[214px] text-[#379a22]">MACD:−0.53</Fit>
        <Fit className="ml-[12px] w-[184px]">DIFF:−0.00</Fit>
        <Fit className="ml-[108px] w-[228px] font-normal text-[#4a90e2]">查看特色数据</Fit>
      </div>
      <Fit className="ml-[26px] mt-[-15px] w-[177px] text-[#ef7640]">DEA:+0.26</Fit>
    </Panel>
  );
}

/* ---------- bottom bars ---------- */

function Action({ label, width, children }: { label: string; width: string; children: ReactNode }) {
  return (
    <div className="flex flex-1 flex-col items-center pt-[23px] text-[36px] text-[#d2d2d2]">
      <svg width="64" height="64" viewBox="-32 -32 64 64" fill="none" stroke="#d0d0d0" strokeWidth="3">
        {children}
      </svg>
      <Fit className={clsx("mt-[8px]", width)}>{label}</Fit>
    </div>
  );
}

function BottomBar() {
  return (
    <footer className="h-[284px] bg-[#252525]">
      <div className="flex h-[164px]">
        <div className="flex w-[270px] flex-col items-center pt-[13px] text-[36px]">
          <svg width="29" height="16">
            <path d="M14.500 0L29 16H0Z" fill="#b0b0b0" />
          </svg>
          <Fit className="mt-[21px] w-[143px] text-[#8b949c]">军工装备</Fit>
          <Fit className="mt-[24px] w-[98px] text-[38px] text-[#dc1212]">1.84%</Fit>
        </div>
        <Action label="下单" width="w-[71px]">
          <path d="M-19 -28H19Q25 -28 25 -22V16L13 28H-19Q-25 28 -25 22V-22Q-25 -28 -19 -28Z" />
          <path d="M-18 -14H18M-18 -6.500H18M-18 1.500H18M-18 9H7" />
        </Action>
        <Action label="诊股" width="w-[71px]">
          <rect x="-29" y="-18" width="58" height="44" rx="6" />
          <path d="M-12 -24.500H12M-21 28H-11M11 28H21M0 -6V15M-10.500 4.500H10.500" />
        </Action>
        <Action label="删自选" width="w-[107px]">
          <rect x="-24" y="-24.500" width="48" height="48" />
          <path d="M-13.500 0H13.500" />
        </Action>
        <Action label="功能" width="w-[71px]">
          <circle cx="0" cy="-0.500" r="26" />
          <path d="M-12 -8.500H12M-12 7H12" />
        </Action>
      </div>
      <div className="flex items-center pl-[318px] pt-[33px]">
        <svg width="48" height="52" viewBox="0 0 48 52">
          <path d="M42 4V48L5 26Z" fill="none" stroke="#d2d2d2" strokeWidth="4.500" strokeLinejoin="round" />
        </svg>
        <svg width="52" height="52" viewBox="0 0 52 52" className="ml-[196px]">
          <circle cx="26" cy="26" r="22.500" fill="none" stroke="#d2d2d2" strokeWidth="4.500" />
        </svg>
        <svg width="48" height="52" viewBox="0 0 48 52" className="ml-[194px]">
          <rect x="3.500" y="5.500" width="41" height="41" rx="1.500" fill="none" stroke="#d2d2d2" strokeWidth="4.500" />
        </svg>
      </div>
    </footer>
  );
}

export default function App() {
  return (
    <main className="h-[2400px] w-[1176px] overflow-hidden bg-white font-['Roboto','Noto_Sans_CJK_SC',sans-serif]">
      <Header />
      <Quote />
      <InfoRows />
      <Tabs />
      <MaLegend />
      <KLine />
      <Volume />
      <Ene />
      <Macd />
      <BottomBar />
    </main>
  );
}
